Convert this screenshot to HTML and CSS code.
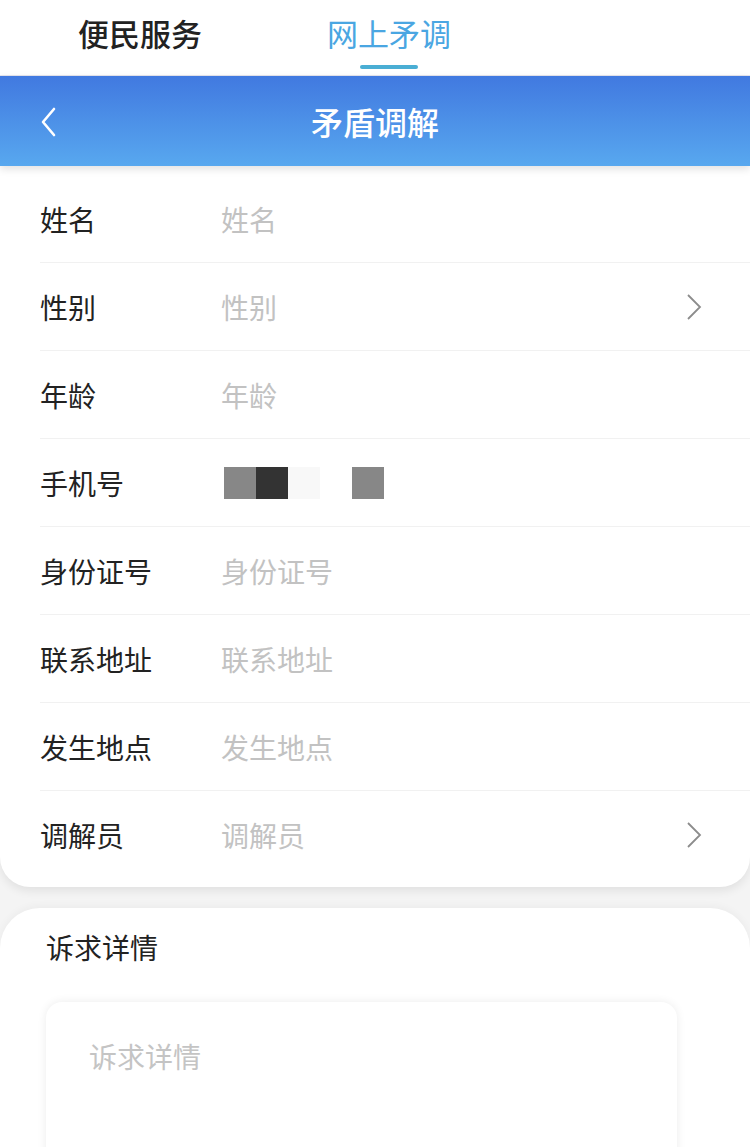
FILE: index.html
```html
<!DOCTYPE html>
<html lang="zh-CN">
<head>
  <meta charset="UTF-8">
  <meta name="viewport" content="width=device-width, initial-scale=1.0">
  <title>矛盾调解</title>
  <link rel="stylesheet" href="styles.css">
</head>
<body>
  <div class="tabs">
    <div class="tab">便民服务</div>
    <div class="tab active">网上矛调</div>
  </div>

  <div class="header">
    <svg class="back" width="20" height="34" viewBox="0 0 20 34">
      <path d="M15 4 L4 17 L15 30" fill="none" stroke="#fff" stroke-width="2.6" stroke-linecap="round" stroke-linejoin="round"/>
    </svg>
    <h1>矛盾调解</h1>
  </div>

  <div class="card form">
    <div class="row"><span class="label">姓名</span><span class="value">姓名</span></div>
    <div class="row">
      <span class="label">性别</span><span class="value">性别</span>
      <svg class="arrow" width="16" height="28" viewBox="0 0 16 28"><path d="M2 2 L14 14 L2 26" fill="none" stroke="#8c8c8c" stroke-width="1.8"/></svg>
    </div>
    <div class="row"><span class="label">年龄</span><span class="value">年龄</span></div>
    <div class="row">
      <span class="label">手机号</span>
      <span class="value masked">
        <i class="px gray"></i><i class="px dark"></i><i class="px light"></i><i class="px faint"></i><i class="px gray"></i>
      </span>
    </div>
    <div class="row"><span class="label">身份证号</span><span class="value">身份证号</span></div>
    <div class="row"><span class="label">联系地址</span><span class="value">联系地址</span></div>
    <div class="row"><span class="label">发生地点</span><span class="value">发生地点</span></div>
    <div class="row last">
      <span class="label">调解员</span><span class="value">调解员</span>
      <svg class="arrow" width="16" height="28" viewBox="0 0 16 28"><path d="M2 2 L14 14 L2 26" fill="none" stroke="#8c8c8c" stroke-width="1.8"/></svg>
    </div>
  </div>

  <div class="card detail">
    <div class="detail-title">诉求详情</div>
    <div class="textarea">诉求详情</div>
  </div>
</body>
</html>
```

FILE: styles.css
```css
body {
  margin: 0;
  background-color: #f4f4f4;
  font-family: "Noto Sans CJK SC", "Noto Sans", sans-serif;
  color: #222;
  overflow: hidden;
}

.tabs {
  height: 75px;
  background: #fff;
  display: flex;
  padding-left: 62px;
  gap: 93px;
  border-bottom: 1px solid #e6e6ee;
}

.tab {
  font-size: 31px;
  font-weight: 500;
  line-height: 66px;
  position: relative;
  padding: 0 16px;
}

.tab.active {
  color: #4aa6e2;
  font-weight: 400;
}

.tab.active::after {
  content: "";
  position: absolute;
  left: 50%;
  bottom: 6px;
  width: 58px;
  height: 4px;
  margin-left: -29px;
  border-radius: 2px;
  background: #4aaed4;
}

.header {
  height: 90px;
  background: linear-gradient(#4179e0, #58a8ef);
  display: flex;
  align-items: center;
  justify-content: center;
  position: relative;
  box-shadow: 0 3px 8px rgba(0, 0, 0, 0.12);
  z-index: 1;
}

.header h1 {
  margin: 0;
  color: #fff;
  font-size: 32px;
  font-weight: 500;
}

.back {
  position: absolute;
  left: 39px;
  top: 29px;
}

.card {
  background: #fff;
}

.form {
  padding: 9px 0 8px 40px;
  border-radius: 0 0 30px 30px;
  box-shadow: 0 4px 10px rgba(0, 0, 0, 0.08);
}

.row {
  height: 87px;
  display: flex;
  align-items: center;
  border-bottom: 1px solid #f1f1f1;
  font-size: 28px;
}

.row.last {
  border-bottom: none;
  height: 88px;
}

.label {
  width: 181px;
  color: #222;
}

.value {
  flex: 1;
  color: #c2c2c2;
}

.arrow {
  margin-right: 48px;
}

.masked {
  display: flex;
  margin-left: 3px;
}

.px {
  width: 32px;
  height: 32px;
  display: block;
}

.px.gray { background: #878787; }
.px.dark { background: #333; }
.px.light { background: #f8f8f8; }
.px.faint { background: #fff; }

.detail {
  margin-top: 21px;
  border-radius: 40px 40px 0 0;
  padding: 19px 0 0 46px;
  height: 239px;
  box-sizing: border-box;
  overflow: hidden;
  box-shadow: 0 -2px 8px rgba(0, 0, 0, 0.04);
}

.detail-title {
  font-size: 28px;
  line-height: 40px;
}

.textarea {
  margin: 35px 0 12px;
  width: 588px;
  height: 200px;
  border-radius: 16px;
  padding: 34px 0 0 43px;
  box-shadow: 0 0 10px rgba(0, 0, 0, 0.08);
  color: #c4c4c4;
  font-size: 28px;
}
```
